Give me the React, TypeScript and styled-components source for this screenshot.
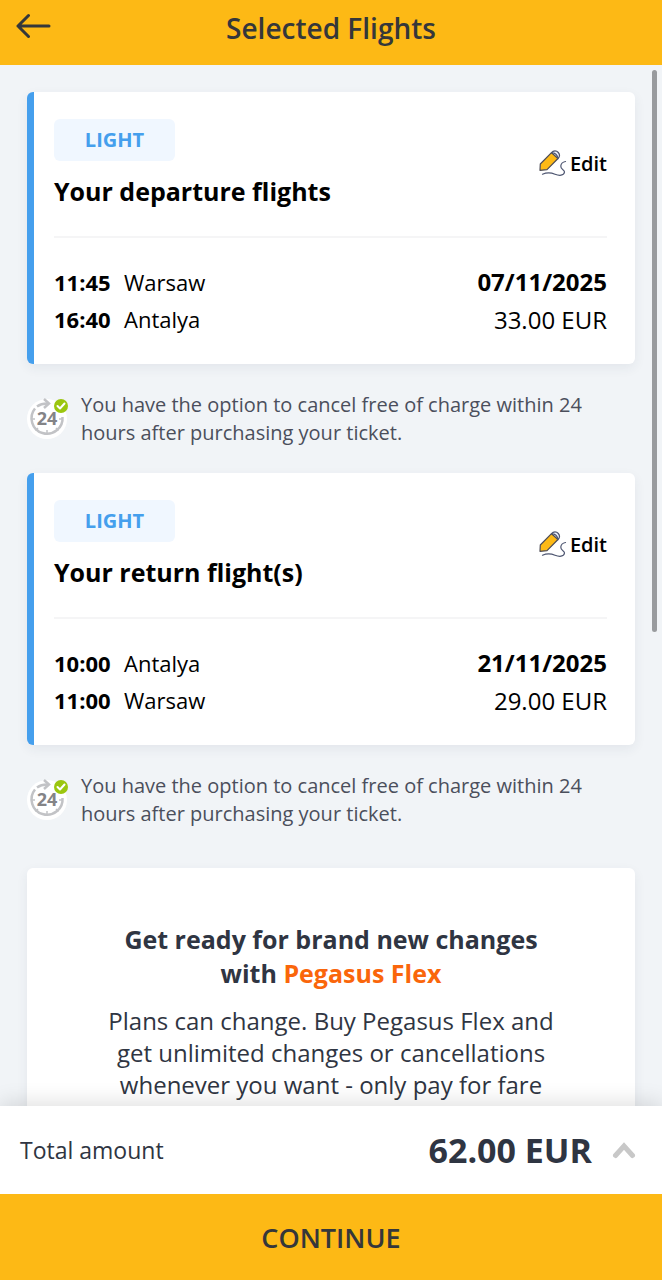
import React from "react";
import styled, { createGlobalStyle } from "styled-components";

const GlobalStyle = createGlobalStyle`
  *, *::before, *::after { box-sizing: border-box; }
  body {
    margin: 0;
    background: #f1f4f7;
    color: #000;
    font-family: "Open Sans", "Noto Sans", sans-serif;
  }
  h1, h2, p, dl, dd, dt { margin: 0; }
  button { border: 0; padding: 0; background: none; font-family: inherit; color: inherit; cursor: pointer; }
`;

const Screen = styled.div`
  display: flex;
  flex-direction: column;
  height: 100vh;
`;

const Header = styled.header`
  display: grid;
  grid-template-columns: 36px 1fr 36px;
  align-items: start;
  height: 65px;
  flex-shrink: 0;
  padding: 8px 16px 0;
  background: #fdb915;
  color: #35373a;
`;

const BackButton = styled.button`
  height: 36px;
  svg { display: block; }
`;

const HeaderTitle = styled.h1`
  font-size: 28px;
  line-height: 40px;
  font-weight: 600;
  text-align: center;
`;

const Viewport = styled.div`
  position: relative;
  flex: 1;
  min-height: 0;
`;

const Content = styled.main`
  display: flex;
  flex-direction: column;
  height: 100%;
  padding: 27px;
  overflow-y: auto;
  scrollbar-width: none;
`;

const ScrollThumb = styled.div`
  position: absolute;
  top: 5px;
  right: 5px;
  width: 5px;
  height: 54%;
  border-radius: 3px;
  background: #999b9e;
`;

const Card = styled.section`
  flex-shrink: 0;
  border-radius: 6px;
  background: #fff;
  box-shadow: 0 4px 12px rgba(40, 60, 90, 0.07);
`;

const FlightCard = styled(Card)`
  padding: 27px 28px 25px 20px;
  border-left: 7px solid #459fed;
`;

const CardTop = styled.div`
  display: flex;
  align-items: center;
  justify-content: space-between;
  padding-bottom: 27px;
  border-bottom: 2px solid #f5f5f6;
`;

const Fare = styled.span`
  display: block;
  width: 121px;
  border-radius: 6px;
  background: #f0f7ff;
  color: #459fed;
  font-size: 20px;
  line-height: 42px;
  font-weight: 700;
  text-align: center;
`;

const CardTitle = styled.h2`
  margin-top: 12px;
  font-size: 25px;
  line-height: 36px;
  font-weight: 700;
`;

const EditButton = styled.button`
  display: flex;
  align-items: center;
  gap: 3px;
  font-size: 20px;
  line-height: 28px;
  font-weight: 600;
`;

const Details = styled.div`
  display: flex;
  justify-content: space-between;
  padding-top: 25px;
`;

const Stops = styled.dl`
  display: grid;
  grid-template-columns: 70px auto;
  grid-auto-rows: 37px;
  align-items: center;
  font-size: 22px;
  dt { font-weight: 700; }
`;

const Fees = styled.div`
  font-size: 24px;
  line-height: 38px;
  text-align: right;
  strong { display: block; font-weight: 700; }
`;

const Note = styled.div`
  display: flex;
  align-items: center;
  flex-shrink: 0;
  gap: 13px;
  padding: 27px 0 26px;
  color: #4b4f5c;
  font-size: 20px;
  line-height: 28px;
  svg { flex-shrink: 0; }
`;

const FlexCard = styled(Card)`
  margin-top: 14px;
  padding: 54px 80px 40px;
  color: #2f3542;
  text-align: center;
`;

const FlexTitle = styled.h2`
  font-size: 25px;
  line-height: 34px;
  font-weight: 700;
  em { color: #fa660b; font-style: normal; }
`;

const FlexText = styled.p`
  margin-top: 15px;
  font-size: 24px;
  line-height: 32px;
`;

const Footer = styled.footer`
  position: relative;
  flex-shrink: 0;
  background: #fff;
  box-shadow: 0 -4px 20px rgba(0, 0, 0, 0.12);
`;

const TotalBar = styled.div`
  display: flex;
  align-items: center;
  height: 88px;
  padding: 0 26px 0 20px;
  color: #2f3542;
  font-size: 23px;
`;

const TotalAmount = styled.strong`
  margin-left: auto;
  font-size: 34px;
  font-weight: 700;
`;

const ExpandButton = styled.button`
  display: flex;
  margin-left: 20px;
`;

const ContinueButton = styled.button`
  display: block;
  width: 100%;
  height: 86px;
  background: #fdb915;
  color: #35373a;
  font-size: 27px;
  font-weight: 600;
`;

const PencilIcon = () => (
  <svg width="28" height="28" viewBox="0 0 28 28" fill="none" strokeLinecap="round" strokeLinejoin="round" aria-hidden="true">
    <path d="M12.500 2.700 1.300 14 1 20.300 8 19.700 19 8.500Z" fill="#fdb915" stroke="#4d4c55" strokeWidth="1.200" />
    <path d="M12.500 2.700C14.500 0.300 17.500 0.500 19.300 2.500C20.800 4.300 20.800 6.700 19 8.500C18.500 5.500 16 3 12.500 2.700Z" fill="#eef1fb" stroke="#4d5570" strokeWidth="1.200" />
    <path d="M3.500 24.200C7.500 22.500 12 22.600 16 24.200C20 25.800 25 26 25.500 22C25.700 19.500 21.500 19.800 21.800 16C22 13.500 23.800 12 26.500 11.500" stroke="#4d5570" strokeWidth="1.200" />
  </svg>
);

const Clock24Icon = () => (
  <svg width="41" height="42" viewBox="0 0 41 42" fill="none" aria-hidden="true">
    <circle cx="20" cy="21" r="20" fill="#fff" />
    <path d="M8 10.500A15.500 15.500 0 1 0 35.500 19" stroke="#c2c3c6" strokeWidth="2.500" />
    <path d="M10 8.500C13 6.300 16.500 5.300 21 5.500" stroke="#c2c3c6" strokeWidth="2.500" />
    <path d="M17 1 22 5.500 17 10" stroke="#c2c3c6" strokeWidth="2.500" />
    <path d="M20 32v4M4 21h4M32 21h4M8.500 32.500l2.500-2.500M31.500 32.500l-2.500-2.500" stroke="#c2c3c6" strokeWidth="1.500" />
    <text x="20" y="27" textAnchor="middle" fill="#838487" stroke="#fff" strokeWidth="3" paintOrder="stroke" fontSize="18" fontWeight="700">24</text>
    <circle cx="34" cy="8" r="7" fill="#9bc60f" />
    <path d="M30.500 8 33 10.500 37.500 5.500" stroke="#fff" strokeWidth="2" strokeLinecap="round" strokeLinejoin="round" />
  </svg>
);

type Stop = { time: string; city: string };
type Flight = { title: string; stops: Stop[]; date: string; price: string };

const flights: Flight[] = [
  {
    title: "Your departure flights",
    stops: [{ time: "11:45", city: "Warsaw" }, { time: "16:40", city: "Antalya" }],
    date: "07/11/2025",
    price: "33.00 EUR",
  },
  {
    title: "Your return flight(s)",
    stops: [{ time: "10:00", city: "Antalya" }, { time: "11:00", city: "Warsaw" }],
    date: "21/11/2025",
    price: "29.00 EUR",
  },
];

const FlightSummary = ({ flight }: { flight: Flight }) => (
  <>
    <FlightCard>
      <CardTop>
        <div>
          <Fare>LIGHT</Fare>
          <CardTitle>{flight.title}</CardTitle>
        </div>
        <EditButton type="button">
          <PencilIcon />
          Edit
        </EditButton>
      </CardTop>
      <Details>
        <Stops>
          {flight.stops.map((stop) => (
            <React.Fragment key={stop.time}>
              <dt>{stop.time}</dt>
              <dd>{stop.city}</dd>
            </React.Fragment>
          ))}
        </Stops>
        <Fees>
          <strong>{flight.date}</strong>
          {flight.price}
        </Fees>
      </Details>
    </FlightCard>
    <Note>
      <Clock24Icon />
      <p>You have the option to cancel free of charge within 24 hours after purchasing your ticket.</p>
    </Note>
  </>
);

export default function App() {
  return (
    <Screen>
      <GlobalStyle />
      <Header>
        <BackButton type="button" aria-label="Back">
          <svg width="36" height="36" viewBox="0 0 36 36" fill="none" stroke="currentColor" strokeWidth="3" strokeLinecap="round" strokeLinejoin="round" aria-hidden="true">
            <path d="M33 18H2M12.500 7.500 2 18 12.500 28.500" />
          </svg>
        </BackButton>
        <HeaderTitle>Selected Flights</HeaderTitle>
      </Header>
      <Viewport>
        <Content>
          {flights.map((flight) => (
            <FlightSummary key={flight.title} flight={flight} />
          ))}
          <FlexCard>
            <FlexTitle>
              Get ready for brand new changes with <em>Pegasus Flex</em>
            </FlexTitle>
            <FlexText>
              Plans can change. Buy Pegasus Flex and get unlimited changes or cancellations whenever you want - only pay for fare
            </FlexText>
          </FlexCard>
        </Content>
        <ScrollThumb />
      </Viewport>
      <Footer>
        <TotalBar>
          <span>Total amount</span>
          <TotalAmount>62.00 EUR</TotalAmount>
          <ExpandButton type="button" aria-label="Show price details">
            <svg width="24" height="20" viewBox="0 0 24 20" fill="none" stroke="#c8c8c8" strokeWidth="5" strokeLinecap="round" aria-hidden="true">
              <path d="M3.500 15.500 12 6 20.500 15.500" />
            </svg>
          </ExpandButton>
        </TotalBar>
        <ContinueButton type="button">CONTINUE</ContinueButton>
      </Footer>
    </Screen>
  );
}
